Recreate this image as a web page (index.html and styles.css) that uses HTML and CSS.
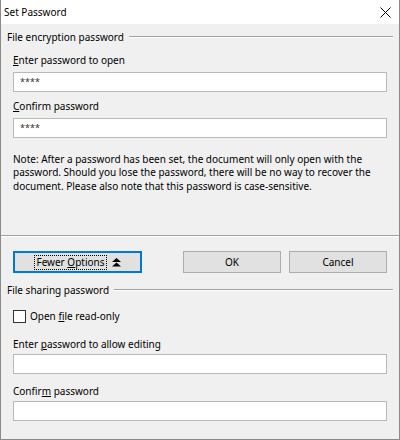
FILE: index.html
```html
<!DOCTYPE html>
<html>
<head>
<meta charset="utf-8">
<link rel="stylesheet" href="styles.css">
</head>
<body>
<div class="window">
  <div class="titlebar">
    <span class="title">Set Password</span>
    <svg class="close" width="11" height="11" viewBox="0 0 11 11"><path d="M0.5 0.5 L10.5 10.5 M10.5 0.5 L0.5 10.5" stroke="#000" stroke-width="1" fill="none"/></svg>
  </div>
  <div class="content">
    <div class="frame-head first"><span>File encryption password</span><div class="rule"></div></div>
    <div class="field f1">
      <label class="lbl"><u>E</u>nter password to open</label>
      <div class="input">****</div>
    </div>
    <div class="field f2">
      <label class="lbl"><u>C</u>onfirm password</label>
      <div class="input">****</div>
    </div>
    <div class="note">
      <div class="note-line">Note: After a password has been set, the document will only open with the</div>
      <div class="note-line">password. Should you lose the password, there will be no way to recover the</div>
      <div class="note-line">document. Please also note that this password is case-sensitive.</div>
    </div>
    <div class="separator"></div>
    <div class="buttons">
      <div class="btn focused"><span class="focusrect">Fewer <u>O</u>ptions</span>
        <svg class="arrows" width="9" height="9" viewBox="0 0 9 9"><path d="M4.5 0 L9 4 L0 4 Z M4.5 4.5 L9 8.5 L0 8.5 Z" fill="#000"/></svg>
      </div>
      <div class="spacer"></div>
      <div class="btn ok">OK</div>
      <div class="btn cancel">Cancel</div>
    </div>
    <div class="frame-head second"><span>File sharing password</span><div class="rule"></div></div>
    <div class="check-row">
      <span class="checkbox"></span><span class="check-label">Open <u>f</u>ile read-only</span>
    </div>
    <div class="field f3">
      <label class="lbl">Enter <u>p</u>assword to allow editing</label>
      <div class="input"></div>
    </div>
    <div class="field f4">
      <label class="lbl">Confir<u>m</u> password</label>
      <div class="input"></div>
    </div>
  </div>
</div>
</body>
</html>
```
FILE: styles.css
```css
html, body {
  margin: 0;
  padding: 0;
  background: #fff;
}
body {
  font-family: "Noto Sans", "Open Sans", sans-serif;
  font-size: 10px;
  color: #000;
}
.window {
  width: 400px;
  height: 440px;
  box-sizing: border-box;
  border: 1px solid #8a8a8a;
  border-top: none;
  background: #f0f0f0;
  display: flex;
  flex-direction: column;
  overflow: hidden;
}
.titlebar {
  height: 24px;
  background: #fff;
  display: flex;
  align-items: center;
  justify-content: space-between;
  padding: 0 8px 0 3px;
  flex: none;
}
.title {
  line-height: 16px;
}
.close {
  display: block;
}
.content {
  display: flex;
  flex-direction: column;
}
.frame-head {
  display: flex;
  align-items: center;
  padding: 0 6px;
  height: 16px;
  line-height: 16px;
  white-space: nowrap;
}
.frame-head.first { margin-top: 5px; }
.frame-head.second { margin-top: 9px; }
.frame-head .rule {
  flex: 1;
  margin-left: 5px;
  border-top: 1px solid #a0a0a0;
  border-bottom: 1px solid #fff;
  margin-top: -1px;
}
.field {
  display: flex;
  flex-direction: column;
  padding: 0 12px;
}
.f1 { margin-top: 7px; }
.f2 { margin-top: 6px; }
.f3 { margin-top: 12px; }
.f4 { margin-top: 9px; }
.lbl {
  line-height: 16px;
  height: 16px;
  margin-bottom: 4px;
}
.f3 .lbl { margin-bottom: 2px; }
.f4 .lbl { margin-bottom: 2px; }
.input {
  height: 20px;
  box-sizing: border-box;
  border: 1px solid #b9b9b9;
  background: #fff;
  padding: 0 6px;
  font-size: 9px;
  line-height: 17px;
  color: #333;
}
.note {
  margin-top: 15px;
  padding: 0 12px;
  line-height: 13.4px;
  white-space: nowrap;
}
.separator {
  margin-top: 42px;
  border-top: 1px solid #a0a0a0;
  border-bottom: 1px solid #fff;
}
.buttons {
  display: flex;
  padding: 0 12px;
  margin-top: 14px;
  gap: 8px;
}
.spacer { flex: 1; }
.btn {
  height: 22px;
  box-sizing: border-box;
  border: 1px solid #adadad;
  background: #e1e1e1;
  display: flex;
  align-items: center;
  justify-content: center;
  line-height: 16px;
}
.btn.focused {
  width: 129px;
  border: 1px solid #0078d7;
  box-shadow: inset 0 0 0 1px #0078d7;
  gap: 5px;
}
.focusrect {
  border: 1px dotted #000;
  padding: 0 1px;
  line-height: 13px;
}
.arrows { display: block; }
.ok { width: 98px; }
.cancel { width: 98px; }
.check-row {
  display: flex;
  align-items: center;
  padding: 0 12px;
  margin-top: 10px;
  height: 16px;
}
.checkbox {
  width: 13px;
  height: 13px;
  box-sizing: border-box;
  border: 1px solid #333;
  background: #fff;
  flex: none;
}
.check-label {
  margin-left: 4px;
  line-height: 16px;
}
```
